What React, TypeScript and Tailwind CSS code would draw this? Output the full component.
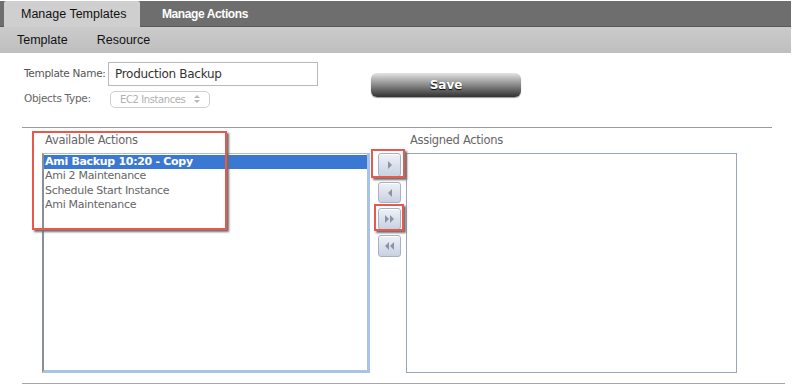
import React from "react";

const Tri = ({ dir, double }: { dir: "r" | "l"; double?: boolean }) => {
  const one = (x: number) =>
    dir === "r" ? `M${x} 3 L${x + 4} 7 L${x} 11 Z` : `M${x + 4} 3 L${x} 7 L${x + 4} 11 Z`;
  return (
    <svg width="14" height="14" viewBox="0 0 14 14">
      {double ? (
        <>
          <path d={one(2)} fill="#8b93ab" />
          <path d={one(7)} fill="#8b93ab" />
        </>
      ) : (
        <path d={one(5)} fill="#8b93ab" />
      )}
    </svg>
  );
};

const MoveBtn = ({ dir, double, h }: { dir: "r" | "l"; double?: boolean; h: string }) => (
  <div
    className={`w-[23px] ${h} rounded-[3px] border border-[#a7b0c4] bg-gradient-to-b from-[#eef1f7] to-[#c9d1e1] flex items-center justify-center shadow-[inset_0_1px_0_#ffffff]`}
  >
    <Tri dir={dir} double={double} />
  </div>
);

export default function App() {
  return (
    <div className="relative w-[793px] h-[388px] bg-white overflow-hidden font-['Liberation_Sans',Arial,sans-serif]">
      {/* Top tab bar */}
      <div className="mt-[1px] mr-[2px] h-[26px] bg-[#6e6e6e] border-b border-[#5a5a5a] flex items-end pl-[4px]">
        <div className="w-[136px] h-[26px] -mb-[1px] bg-[#cfcfcf] rounded-t-[2px] flex items-center pl-[17px] text-[12.5px] text-[#111]">
          Manage Templates
        </div>
        <div className="h-[25px] flex items-center pl-[22px] text-[12px] font-bold text-white tracking-[-0.4px]">
          Manage Actions
        </div>
      </div>
      {/* Sub nav */}
      <div className="mr-[2px] h-[26px] bg-gradient-to-b from-[#cbcbcb] to-[#bebebe] flex items-center pl-[17px] gap-[29px] text-[12.5px] text-[#111]">
        <span>Template</span>
        <span>Resource</span>
      </div>

      {/* Form */}
      <div className="flex pl-[24px] pt-[9px] font-['DejaVu_Sans',Verdana,sans-serif]">
        <div className="flex flex-col">
          <div className="flex items-center h-[24px]">
            <span className="w-[84px] text-[10.5px] text-[#555] tracking-[-0.3px]">Template Name:</span>
            <div className="w-[210px] h-[24px] border border-[#b9b9b9] flex items-center pl-[6px] text-[12px] text-[#333] tracking-[-0.3px]">
              Production Backup
            </div>
          </div>
          <div className="flex items-center h-[18px] mt-[4px]">
            <span className="w-[86px] text-[10.5px] text-[#666] tracking-[-0.3px]">Objects Type:</span>
            <div className="w-[100px] h-[17px] border border-[#cfcfcf] rounded-[5px] flex items-center pl-[9px] text-[10px] text-[#b0b0b0] tracking-[-0.4px] whitespace-nowrap">
              <span>EC2 Instances</span>
              <svg width="8" height="12" viewBox="0 0 8 12" className="ml-[8px] shrink-0">
                <path d="M1 5 L4 2 L7 5 Z" fill="#b8b8b8" />
                <path d="M1 7 L4 10 L7 7 Z" fill="#b8b8b8" />
              </svg>
            </div>
          </div>
        </div>
        <div className="ml-[53px] mt-[11px] w-[150px] h-[24px] rounded-[6px] bg-gradient-to-b from-[#e4e4e4] via-[#8a8a8a] to-[#333333] flex items-center justify-center text-[12px] font-bold text-white [text-shadow:0_1px_1px_#000] shadow-[0_1px_1px_#999]">
          Save
        </div>
      </div>

      {/* Divider */}
      <div className="ml-[22px] w-[750px] mt-[19px] h-[1px] bg-[#9c9c9c]" />

      {/* Lists */}
      <div className="flex ml-[42px] mt-[3px] font-['DejaVu_Sans',Verdana,sans-serif]">
        <div className="flex flex-col">
          <div className="pl-[3px] h-[22px] text-[11.5px] text-[#666] tracking-[-0.3px] leading-[18px]">Available Actions</div>
          <div className="w-[328px] h-[220px] border-l-[2px] border-l-[#8a8f98] border-t border-t-[#a8bfdc] border-r-[3px] border-r-[#a9c3e6] border-b-[3px] border-b-[#a9c3e6] pt-[1px] text-[11px] text-[#666] leading-[14.3px] tracking-[-0.3px]">
            <div className="bg-[#3a78d3] text-white font-bold pl-[1px]">Ami Backup 10:20 - Copy</div>
            <div className="pl-[1px]">Ami 2 Maintenance</div>
            <div className="pl-[1px]">Schedule Start Instance</div>
            <div className="pl-[1px]">Ami Maintenance</div>
          </div>
        </div>
        <div className="flex flex-col ml-[8px] mt-[22px] gap-[5px]">
          <MoveBtn dir="r" h="h-[24px]" />
          <MoveBtn dir="l" h="h-[21px]" />
          <MoveBtn dir="r" double h="h-[22px]" />
          <MoveBtn dir="l" double h="h-[22px]" />
        </div>
        <div className="flex flex-col ml-[5px]">
          <div className="pl-[4px] h-[22px] text-[11.5px] text-[#666] tracking-[-0.3px] leading-[18px]">Assigned Actions</div>
          <div className="w-[331px] h-[220px] border border-[#98a6bb]" />
        </div>
      </div>

      {/* Bottom divider */}
      <div className="ml-[22px] w-[763px] mt-[10px] h-[1px] bg-[#a8a8a8]" />

      {/* Annotation boxes */}
      <div className="absolute left-[32px] top-[131px] w-[195px] h-[99px] border-2 border-[#e8594b] shadow-[2px_2px_2px_#6d6d6d]" />
      <div className="absolute left-[371px] top-[149px] w-[34px] h-[29px] border-2 border-[#e8594b] shadow-[2px_2px_2px_#6d6d6d]" />
      <div className="absolute left-[374px] top-[204px] w-[30px] h-[27px] border-2 border-[#e8594b] shadow-[2px_2px_2px_#6d6d6d]" />
    </div>
  );
}
